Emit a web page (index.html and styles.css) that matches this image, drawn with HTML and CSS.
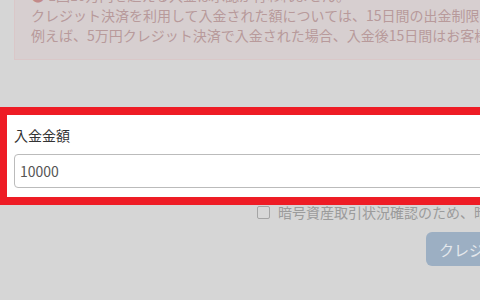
FILE: index.html
```html
<!DOCTYPE html>
<html lang="ja">
<head>
  <meta charset="UTF-8">
  <meta name="viewport" content="width=device-width, initial-scale=1.0">
  <title>入金</title>
  <link rel="stylesheet" href="styles.css">
</head>
<body>
  <div class="page">
    <div class="alert">
      <p><span class="alert-icon">●</span> 1回10万円を超える入金は承認が行われません。</p>
      <p>クレジット決済を利用して入金された額については、15日間の出金制限がかかります。</p>
      <p>例えば、5万円クレジット決済で入金された場合、入金後15日間はお客様の口座から出金できません。</p>
    </div>

    <div class="highlight">
      <label for="amount">入金金額</label>
      <input type="text" id="amount" value="10000">
    </div>

    <div class="check-row">
      <span class="checkbox"></span>
      <span>暗号資産取引状況確認のため、暗号資産取引所の口座情報を提出します。</span>
    </div>

    <div class="actions">
      <button>クレジット決済で入金する</button>
    </div>
  </div>
</body>
</html>
```

FILE: styles.css
```css
body {
  font-family: "Noto Sans CJK JP", "Noto Sans", sans-serif;
  background: #d6d6d6;
  margin: 0;
  overflow: hidden;
  color: #333;
  font-size: 14px;
}
.page {
  width: 520px;
}
.alert {
  margin: -31px 0 0 14px;
  padding: 15px 0 14px 16px;
  background: #d7cfd0;
  border: 1px solid #dac7c8;
  color: #b89a9b;
  line-height: 20px;
  white-space: nowrap;
}
.alert p {
  margin: 0;
}
.alert-icon {
  color: #c38a8a;
}
.highlight {
  width: 466px;
  margin: 47px 0 0 -1px;
  padding: 10px 0 9px 7px;
  background: #fff;
  border: 8px solid #ee1c25;
  overflow: hidden;
}
.highlight label {
  display: block;
  line-height: 20px;
  margin-bottom: 9px;
  color: #333;
}
.highlight input {
  box-sizing: border-box;
  width: 520px;
  height: 34px;
  padding: 0 5px;
  border: 1px solid #bbb;
  border-radius: 4px;
  font-family: inherit;
  font-size: 14px;
  color: #555;
}
.check-row {
  display: flex;
  align-items: center;
  gap: 8px;
  margin-top: -3px;
  padding-left: 257px;
  line-height: 20px;
  color: #9b9b9b;
  white-space: nowrap;
}
.checkbox {
  flex: none;
  width: 11px;
  height: 11px;
  border: 1px solid #a5a5a5;
  border-radius: 2px;
  background: #d8d8d8;
}
.actions {
  margin-top: 10px;
  padding-left: 426px;
}
.actions button {
  height: 34px;
  padding: 0 13px;
  background: #9cafc3;
  color: #e4e8ec;
  border: none;
  border-radius: 6px;
  font-family: inherit;
  font-size: 15px;
  white-space: nowrap;
}
```
